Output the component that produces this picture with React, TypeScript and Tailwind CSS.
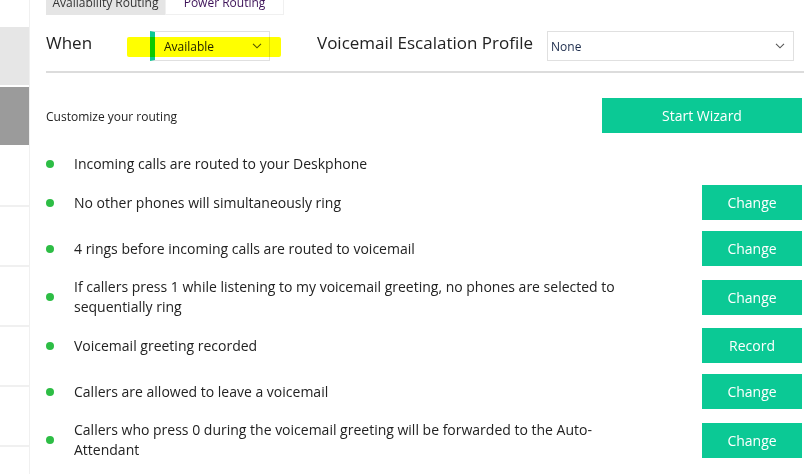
import React from "react"

const rows = [
  { text: "Incoming calls are routed to your Deskphone", action: "" },
  { text: "No other phones will simultaneously ring", action: "Change" },
  { text: "4 rings before incoming calls are routed to voicemail", action: "Change" },
  {
    text: "If callers press 1 while listening to my voicemail greeting, no phones are selected to sequentially ring",
    action: "Change",
  },
  { text: "Voicemail greeting recorded", action: "Record" },
  { text: "Callers are allowed to leave a voicemail", action: "Change" },
  {
    text: "Callers who press 0 during the voicemail greeting will be forwarded to the Auto-Attendant",
    action: "Change",
  },
]

function Chevron() {
  return (
    <svg width="10" height="6" viewBox="0 0 10 6" className="shrink-0">
      <path d="M1 0.8 L5 4.8 L9 0.8" fill="none" stroke="#555" strokeWidth="1.1" />
    </svg>
  )
}

export default function App() {
  return (
    <div
      className="flex w-[804px] h-[474px] overflow-hidden bg-white text-[#222]"
      style={{ fontFamily: '"Open Sans", "Noto Sans", sans-serif' }}
    >
      {/* Sidebar */}
      <div className="w-[30px] shrink-0 flex flex-col border-r border-[#f0f0f0]">
        <div className="h-[27px] shrink-0" />
        <div className="h-[58px] shrink-0 bg-[#e6e6e6]" />
        <div className="h-[2px] shrink-0" />
        <div className="h-[58px] shrink-0 bg-[#9b9b9b]" />
        <div className="h-[2px] shrink-0" />
        {[0, 1, 2, 3, 4, 5].map((i) => (
          <div key={i} className="h-[60px] shrink-0 border-b-2 border-[#f0f0f0]" />
        ))}
      </div>

      {/* Main */}
      <div className="flex-1 flex flex-col pl-[16px] pr-[2px]">
        {/* Tabs */}
        <div className="-mt-[9px] flex h-[24px] text-[12px]">
          <div className="w-[119px] bg-[#e5e5e5] flex items-center justify-center text-[#333]">
            Availability Routing
          </div>
          <div className="w-[119px] border border-[#f0f0f0] flex items-center justify-center text-[#3d1258]">
            Power Routing
          </div>
        </div>

        {/* When / Escalation */}
        <div className="relative mt-[16px] h-[30px] flex items-center">
          <div className="w-[104px] text-[17px] mb-[7px]">When</div>
          <div className="w-[120px] h-[30px] border border-[#e0e0e0] border-l-[5px] border-l-[#0bc995] flex items-center justify-between pl-[9px] pr-[7px] text-[12px]">
            <span className="mt-[1px]">Available</span>
            <Chevron />
          </div>
          <div className="ml-[47px] text-[17px] mb-[7px]">Voicemail Escalation Profile</div>
          <div className="ml-[14px] w-[247px] h-[30px] border border-[#e0e0e0] flex items-center justify-between pl-[3px] pr-[8px] text-[12px] text-[#1a2a4a]">
            <span className="mt-[1px]">None</span>
            <Chevron />
          </div>
          <div className="absolute left-[81px] top-[6px] w-[154px] h-[20px] bg-[#ffff00] mix-blend-multiply rounded-[2px]" />
        </div>

        <div className="mt-[10px] h-[2px] bg-[#dcdcdc] -mr-[2px]" />

        {/* Customize */}
        <div className="mt-[25px] flex items-center justify-between">
          <span className="text-[12px] mt-[3px]">Customize your routing</span>
          <button className="w-[200px] h-[35px] bg-[#0bc995] text-white text-[14px]">Start Wizard</button>
        </div>

        {/* Routing rules */}
        <div className="mt-[21px] flex flex-col gap-[11px]">
          {rows.map((row, i) => (
            <div key={i} className="flex items-center">
              <div className="w-[8px] h-[8px] rounded-full bg-[#2dbd45] shrink-0" />
              <div className="ml-[20px] w-[580px] text-[14px] leading-[20px]">{row.text}</div>
              {row.action && (
                <button className="ml-auto w-[100px] h-[35px] shrink-0 bg-[#0bc995] text-white text-[14px]">
                  {row.action}
                </button>
              )}
            </div>
          ))}
        </div>
      </div>
    </div>
  )
}
